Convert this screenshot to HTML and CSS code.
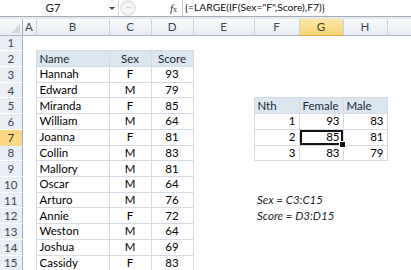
FILE: index.html
```html
<!DOCTYPE html>
<html lang="en">
<head>
    <meta charset="UTF-8">
    <title>LARGE with criteria</title>
    <link rel="stylesheet" href="styles.css">
</head>
<body>
    <div class="formula-bar">
        <div class="name-box">G7<span class="caret"></span></div>
        <div class="bar-btns"><span class="round-btn"></span></div>
        <div class="fx"><i>f</i><span>x</span></div>
        <div class="formula">{=LARGE(IF(Sex="F",Score),F7)}</div>
    </div>
    <div class="bar-gap"></div>
    <table class="sheet">
        <colgroup>
            <col style="width:22px"><col style="width:14px"><col style="width:73px"><col style="width:42px"><col style="width:42px">
            <col style="width:61px"><col style="width:45px"><col style="width:44px"><col style="width:44px"><col style="width:24px">
        </colgroup>
        <tr class="heads">
            <th class="corner"><span class="tri"></span></th>
            <th>A</th><th>B</th><th>C</th><th>D</th><th>E</th><th>F</th><th class="active">G</th><th>H</th><th></th>
        </tr>
        <tr><th class="rh">1</th><td></td><td></td><td></td><td></td><td></td><td></td><td></td><td></td><td></td></tr>
        <tr><th class="rh">2</th><td></td><td class="t hd">Name</td><td class="t hd c">Sex</td><td class="t hd c">Score</td><td></td><td></td><td></td><td></td><td></td></tr>
        <tr><th class="rh">3</th><td></td><td class="t">Hannah</td><td class="t c">F</td><td class="t c">93</td><td></td><td></td><td></td><td></td><td></td></tr>
        <tr><th class="rh">4</th><td></td><td class="t">Edward</td><td class="t c">M</td><td class="t c">79</td><td></td><td></td><td></td><td></td><td></td></tr>
        <tr><th class="rh">5</th><td></td><td class="t">Miranda</td><td class="t c">F</td><td class="t c">85</td><td></td><td class="t hd">Nth</td><td class="t hd">Female</td><td class="t hd">Male</td><td></td></tr>
        <tr><th class="rh">6</th><td></td><td class="t">William</td><td class="t c">M</td><td class="t c">64</td><td></td><td class="t r">1</td><td class="t r">93</td><td class="t r">83</td><td></td></tr>
        <tr><th class="rh active">7</th><td></td><td class="t">Joanna</td><td class="t c">F</td><td class="t c">81</td><td></td><td class="t r">2</td><td class="t r sel">85</td><td class="t r">81</td><td></td></tr>
        <tr><th class="rh">8</th><td></td><td class="t">Collin</td><td class="t c">M</td><td class="t c">83</td><td></td><td class="t r">3</td><td class="t r">83</td><td class="t r">79</td><td></td></tr>
        <tr><th class="rh">9</th><td></td><td class="t">Mallory</td><td class="t c">M</td><td class="t c">81</td><td></td><td></td><td></td><td></td><td></td></tr>
        <tr><th class="rh">10</th><td></td><td class="t">Oscar</td><td class="t c">M</td><td class="t c">64</td><td></td><td></td><td></td><td></td><td></td></tr>
        <tr><th class="rh">11</th><td></td><td class="t">Arturo</td><td class="t c">M</td><td class="t c">76</td><td></td><td class="note">Sex = C3:C15</td><td></td><td></td><td></td></tr>
        <tr><th class="rh">12</th><td></td><td class="t">Annie</td><td class="t c">F</td><td class="t c">72</td><td></td><td class="note">Score = D3:D15</td><td></td><td></td><td></td></tr>
        <tr><th class="rh">13</th><td></td><td class="t">Weston</td><td class="t c">M</td><td class="t c">64</td><td></td><td></td><td></td><td></td><td></td></tr>
        <tr><th class="rh">14</th><td></td><td class="t">Joshua</td><td class="t c">M</td><td class="t c">69</td><td></td><td></td><td></td><td></td><td></td></tr>
        <tr><th class="rh">15</th><td></td><td class="t">Cassidy</td><td class="t c">F</td><td class="t c">83</td><td></td><td></td><td></td><td></td><td></td></tr>
    </table>
</body>
</html>
```

FILE: styles.css
```css
* {
    margin: 0;
    padding: 0;
    box-sizing: border-box;
}
body {
    font-family: Lato, "Liberation Sans", Arial, sans-serif;
    background-color: #fff;
    color: #000;
    width: 411px;
    overflow: hidden;
}
.formula-bar {
    display: flex;
    align-items: center;
    height: 17px;
    background-color: #fff;
    border-bottom: 1px solid #a5acb5;
    font-size: 11.5px;
}
.name-box {
    position: relative;
    width: 118px;
    height: 16px;
    line-height: 16px;
    text-align: center;
    padding-right: 12px;
    color: #222;
}
.caret {
    position: absolute;
    right: 3px;
    top: 7px;
    border-left: 3px solid transparent;
    border-right: 3px solid transparent;
    border-top: 3px solid #444;
}
.bar-btns {
    width: 52px;
    height: 16px;
    display: flex;
    align-items: center;
    border-left: 1px solid #d5d9de;
    overflow: hidden;
}
.round-btn {
    position: relative;
    width: 16px;
    height: 16px;
    margin-left: 1px;
    border-radius: 50%;
    border: 2px solid #e3e5e8;
    background-color: #f4f5f6;
}
.round-btn::after {
    content: "";
    position: absolute;
    left: 4px;
    top: 5px;
    width: 5px;
    height: 1px;
    background-color: #c9ccd0;
}
.fx {
    width: 12px;
    font-family: "Liberation Serif", serif;
    font-size: 11px;
    color: #333;
}
.fx span {
    font-size: 8px;
}
.formula {
    flex: 1;
    height: 16px;
    line-height: 15px;
    padding-left: 2px;
    border-left: 1px solid #c6cbd1;
    white-space: nowrap;
    overflow: hidden;
    font-size: 10.3px;
    color: #111;
}
.bar-gap {
    height: 2px;
    background-color: #e6e9ed;
}
.sheet {
    table-layout: fixed;
    border-collapse: collapse;
    width: 411px;
    font-size: 11.5px;
}
.sheet tr {
    height: 15.72px;
}
.sheet tr.heads {
    height: 16px;
}
.sheet td {
    padding: 0 3px;
    white-space: nowrap;
    overflow: visible;
    line-height: 14px;
}
.heads th {
    font-weight: normal;
    color: #3a4656;
    background: linear-gradient(#f9fafb, #e8ecf1);
    border-right: 1px solid #cdd3db;
    border-bottom: 1px solid #a9b7c6;
    text-align: center;
    line-height: 15px;
}
.heads th.active {
    background: linear-gradient(#fbe7a6, #f6d475);
    border-bottom: 1px solid #e3a83b;
    color: #3a3a2a;
}
.heads th.corner {
    position: relative;
    border-right: 1px solid #9eb1c6;
}
.tri {
    position: absolute;
    right: 2px;
    bottom: 2px;
    border-left: 9px solid transparent;
    border-bottom: 9px solid #d3d7dc;
}
.rh {
    font-weight: normal;
    color: #3a4656;
    background-color: #e9eef4;
    border-right: 1px solid #9eb1c6;
    border-bottom: 1px solid #fff;
    text-align: center;
}
.rh.active {
    background-color: #f9d785;
    border-bottom-color: #f9d785;
    color: #3a3a2a;
}
.t {
    border: 1px solid #d6dbe1;
    background-color: #fff;
}
.t.hd {
    background-color: #dce6f1;
    color: #1b2733;
}
.c {
    text-align: center;
}
.r {
    text-align: right;
}
.sel {
    position: relative;
    box-shadow: inset 0 0 0 2px #111;
}
.sel::after {
    content: "";
    position: absolute;
    right: -3px;
    bottom: -3px;
    width: 5px;
    height: 5px;
    background-color: #111;
    border: 1px solid #fff;
}
.note {
    font-style: italic;
    color: #1b2733;
}
```
